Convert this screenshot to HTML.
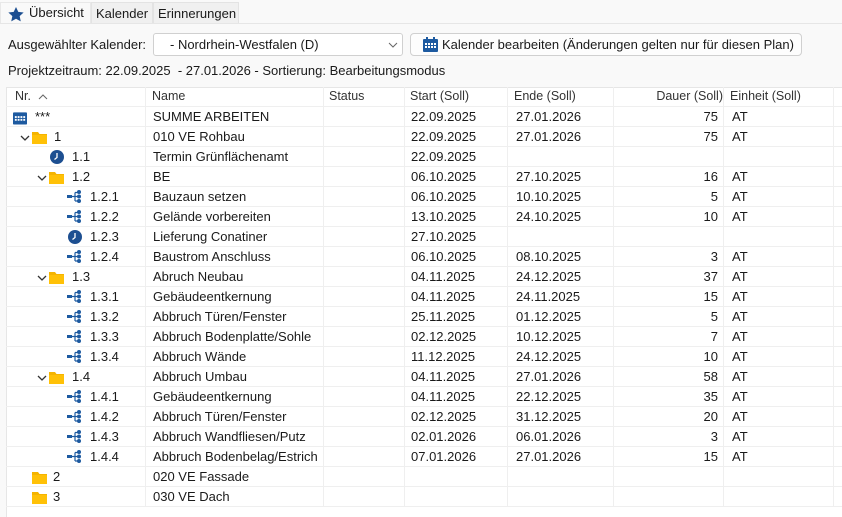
<!DOCTYPE html>
<html><head><meta charset="utf-8"><style>
*{margin:0;padding:0;box-sizing:border-box}
body{width:842px;height:517px;background:#f9f9f9;font-family:"Liberation Sans",sans-serif;font-size:13px;color:#1a1a1a;position:relative;overflow:hidden}
.a{position:absolute;white-space:nowrap}
.tab{position:absolute;top:2px;height:21px;border:1px solid #e3e3e3;border-bottom:none;background:#f0f0f0;padding:3px 4px 0}
#tbl{position:absolute;left:6px;top:87px;width:836px;height:430px;background:#fff;border-left:1px solid #e6e6e6;border-top:1px solid #e6e6e6}
.r{position:absolute;left:6px;width:836px;height:20px;border-bottom:1px solid #efefef}
.r span{position:absolute;top:2px;white-space:nowrap}
.vl{position:absolute;top:87px;height:420px;width:1px;background:#efefef}
.h span{color:#333;font-size:12.5px}
</style></head><body>
<div class="tab" style="left:0;width:91px;background:#f9f9f9;border-color:#e8e8e8;height:22px">
<svg class="a" style="left:7px;top:4px" width="16" height="15" viewBox="0 0 24 23"><path d="M12 0l3.5 7.5 8.2.9-6.1 5.6 1.7 8.1L12 18l-7.3 4.1 1.7-8.1L.3 8.4l8.2-.9z" fill="#1d4f91"/></svg>
<span class="a" style="left:28px;top:2px">Übersicht</span></div>
<div class="tab" style="left:91px;width:62px"><span>Kalender</span></div>
<div class="tab" style="left:153px;width:86px"><span>Erinnerungen</span></div>
<div class="a" style="left:0;top:23px;width:842px;height:1px;background:#e6e6e6"></div>

<span class="a" style="left:8px;top:37px">Ausgewählter Kalender:</span>
<div class="a" style="left:153px;top:33px;width:250px;height:23px;background:#fff;border:1px solid #d0d0d0;border-radius:3px"><span class="a" style="left:16px;top:3px">- Nordrhein-Westfalen (D)</span>
<svg class="a" style="left:234px;top:8px" width="10" height="6"><path d="M1 1l4 4 4-4" stroke="#666" fill="none"/></svg></div>
<div class="a" style="left:410px;top:33px;width:392px;height:23px;background:#fdfdfd;border:1px solid #d0d0d0;border-radius:4px">
<svg class="a" style="left:12px;top:3px" width="15" height="15" viewBox="0 0 15 15"><rect x="0" y="2" width="15" height="13" rx="1" fill="#1d5aa0"/><rect x="3" y="0" width="2" height="4" fill="#1d5aa0"/><rect x="10" y="0" width="2" height="4" fill="#1d5aa0"/><g fill="#fff"><rect x="2" y="6" width="2" height="2"/><rect x="5" y="6" width="2" height="2"/><rect x="8" y="6" width="2" height="2"/><rect x="11" y="6" width="2" height="2"/><rect x="2" y="9" width="2" height="2"/><rect x="5" y="9" width="2" height="2"/><rect x="8" y="9" width="2" height="2"/><rect x="11" y="9" width="2" height="2"/></g></svg>
<span class="a" style="left:31px;top:3px">Kalender bearbeiten (Änderungen gelten nur für diesen Plan)</span></div>
<span class="a" style="left:8px;top:63px">Projektzeitraum: 22.09.2025 &nbsp;- 27.01.2026 - Sortierung: Bearbeitungsmodus</span>

<div id="tbl"></div>
<div class="vl" style="left:145px"></div><div class="vl" style="left:323px"></div><div class="vl" style="left:404px"></div><div class="vl" style="left:507px"></div><div class="vl" style="left:613px"></div><div class="vl" style="left:723px"></div><div class="vl" style="left:833px"></div>

<svg width="0" height="0" style="position:absolute"><defs>
<g id="fo"><path d="M0 2h6l1.5 2H15v10H0z" fill="#f5b400"/><path d="M0 5h15v9H0z" fill="#ffc107"/></g>
<g id="cl"><circle cx="7" cy="7" r="7" fill="#1d4f91"/><path d="M7 3v4.5L4.5 9.5" stroke="#fff" stroke-width="1.3" fill="none"/></g>
<g id="fl"><rect x="0" y="5" width="5" height="3" fill="#1d5aa0"/><circle cx="12" cy="2" r="2" fill="#1d5aa0"/><circle cx="12" cy="6.5" r="2" fill="#1d5aa0"/><circle cx="12" cy="11" r="2" fill="#1d5aa0"/><path d="M5 6.5h5M8 2.5v8.5M8 2.5h3M8 11h3" stroke="#1d5aa0" stroke-width="1.2" fill="none"/></g>
<g id="ch"><path d="M1 1l4 4 4-4" stroke="#333" stroke-width="1.3" fill="none"/></g>
</defs></svg>

<div class="r h" style="top:87px"><span style="left:9px">Nr.</span><svg class="a" style="left:32px;top:7px" width="10" height="6"><path d="M1 5l4-4 4 4" stroke="#666" fill="none"/></svg><span style="left:146px">Name</span><span style="left:323px">Status</span><span style="left:404px">Start (Soll)</span><span style="left:508px">Ende (Soll)</span><span style="left:612px;width:105px;text-align:right">Dauer (Soll)</span><span style="left:724px">Einheit (Soll)</span></div>

<div class="r" style="top:107px"><svg class="a" style="left:7px;top:3px" width="14" height="15" viewBox="0 0 15 15"><rect x="0" y="2" width="15" height="13" rx="1" fill="#1d5aa0"/><g fill="#fff"><rect x="2" y="6" width="2" height="2"/><rect x="5" y="6" width="2" height="2"/><rect x="8" y="6" width="2" height="2"/><rect x="11" y="6" width="2" height="2"/><rect x="2" y="9" width="2" height="2"/><rect x="5" y="9" width="2" height="2"/><rect x="8" y="9" width="2" height="2"/><rect x="11" y="9" width="2" height="2"/></g></svg><span style="left:29px">***</span><span style="left:147px">SUMME ARBEITEN</span><span style="left:405px">22.09.2025</span><span style="left:510px">27.01.2026</span><span style="left:612px;width:100px;text-align:right">75</span><span style="left:726px">AT</span></div>

<div class="r" style="top:127px"><svg class="a" style="left:14px;top:8px" width="10" height="6"><use href="#ch"/></svg><svg class="a" style="left:26px;top:3px" width="15" height="14"><use href="#fo"/></svg><span style="left:48px">1</span><span style="left:147px">010 VE Rohbau</span><span style="left:405px">22.09.2025</span><span style="left:510px">27.01.2026</span><span style="left:612px;width:100px;text-align:right">75</span><span style="left:726px">AT</span></div>

<div class="r" style="top:147px"><svg class="a" style="left:44px;top:3px" width="14" height="14"><use href="#cl"/></svg><span style="left:66px">1.1</span><span style="left:147px">Termin Grünflächenamt</span><span style="left:405px">22.09.2025</span></div>

<div class="r" style="top:167px"><svg class="a" style="left:31px;top:8px" width="10" height="6"><use href="#ch"/></svg><svg class="a" style="left:43px;top:3px" width="15" height="14"><use href="#fo"/></svg><span style="left:66px">1.2</span><span style="left:147px">BE</span><span style="left:405px">06.10.2025</span><span style="left:510px">27.10.2025</span><span style="left:612px;width:100px;text-align:right">16</span><span style="left:726px">AT</span></div>

<div class="r" style="top:187px"><svg class="a" style="left:61px;top:3px" width="15" height="14"><use href="#fl"/></svg><span style="left:84px">1.2.1</span><span style="left:147px">Bauzaun setzen</span><span style="left:405px">06.10.2025</span><span style="left:510px">10.10.2025</span><span style="left:612px;width:100px;text-align:right">5</span><span style="left:726px">AT</span></div>
<div class="r" style="top:207px"><svg class="a" style="left:61px;top:3px" width="15" height="14"><use href="#fl"/></svg><span style="left:84px">1.2.2</span><span style="left:147px">Gelände vorbereiten</span><span style="left:405px">13.10.2025</span><span style="left:510px">24.10.2025</span><span style="left:612px;width:100px;text-align:right">10</span><span style="left:726px">AT</span></div>
<div class="r" style="top:227px"><svg class="a" style="left:62px;top:3px" width="14" height="14"><use href="#cl"/></svg><span style="left:84px">1.2.3</span><span style="left:147px">Lieferung Conatiner</span><span style="left:405px">27.10.2025</span></div>
<div class="r" style="top:247px"><svg class="a" style="left:61px;top:3px" width="15" height="14"><use href="#fl"/></svg><span style="left:84px">1.2.4</span><span style="left:147px">Baustrom Anschluss</span><span style="left:405px">06.10.2025</span><span style="left:510px">08.10.2025</span><span style="left:612px;width:100px;text-align:right">3</span><span style="left:726px">AT</span></div>

<div class="r" style="top:267px"><svg class="a" style="left:31px;top:8px" width="10" height="6"><use href="#ch"/></svg><svg class="a" style="left:43px;top:3px" width="15" height="14"><use href="#fo"/></svg><span style="left:66px">1.3</span><span style="left:147px">Abruch Neubau</span><span style="left:405px">04.11.2025</span><span style="left:510px">24.12.2025</span><span style="left:612px;width:100px;text-align:right">37</span><span style="left:726px">AT</span></div>
<div class="r" style="top:287px"><svg class="a" style="left:61px;top:3px" width="15" height="14"><use href="#fl"/></svg><span style="left:84px">1.3.1</span><span style="left:147px">Gebäudeentkernung</span><span style="left:405px">04.11.2025</span><span style="left:510px">24.11.2025</span><span style="left:612px;width:100px;text-align:right">15</span><span style="left:726px">AT</span></div>
<div class="r" style="top:307px"><svg class="a" style="left:61px;top:3px" width="15" height="14"><use href="#fl"/></svg><span style="left:84px">1.3.2</span><span style="left:147px">Abbruch Türen/Fenster</span><span style="left:405px">25.11.2025</span><span style="left:510px">01.12.2025</span><span style="left:612px;width:100px;text-align:right">5</span><span style="left:726px">AT</span></div>
<div class="r" style="top:327px"><svg class="a" style="left:61px;top:3px" width="15" height="14"><use href="#fl"/></svg><span style="left:84px">1.3.3</span><span style="left:147px">Abbruch Bodenplatte/Sohle</span><span style="left:405px">02.12.2025</span><span style="left:510px">10.12.2025</span><span style="left:612px;width:100px;text-align:right">7</span><span style="left:726px">AT</span></div>
<div class="r" style="top:347px"><svg class="a" style="left:61px;top:3px" width="15" height="14"><use href="#fl"/></svg><span style="left:84px">1.3.4</span><span style="left:147px">Abbruch Wände</span><span style="left:405px">11.12.2025</span><span style="left:510px">24.12.2025</span><span style="left:612px;width:100px;text-align:right">10</span><span style="left:726px">AT</span></div>

<div class="r" style="top:367px"><svg class="a" style="left:31px;top:8px" width="10" height="6"><use href="#ch"/></svg><svg class="a" style="left:43px;top:3px" width="15" height="14"><use href="#fo"/></svg><span style="left:66px">1.4</span><span style="left:147px">Abbruch Umbau</span><span style="left:405px">04.11.2025</span><span style="left:510px">27.01.2026</span><span style="left:612px;width:100px;text-align:right">58</span><span style="left:726px">AT</span></div>
<div class="r" style="top:387px"><svg class="a" style="left:61px;top:3px" width="15" height="14"><use href="#fl"/></svg><span style="left:84px">1.4.1</span><span style="left:147px">Gebäudeentkernung</span><span style="left:405px">04.11.2025</span><span style="left:510px">22.12.2025</span><span style="left:612px;width:100px;text-align:right">35</span><span style="left:726px">AT</span></div>
<div class="r" style="top:407px"><svg class="a" style="left:61px;top:3px" width="15" height="14"><use href="#fl"/></svg><span style="left:84px">1.4.2</span><span style="left:147px">Abbruch Türen/Fenster</span><span style="left:405px">02.12.2025</span><span style="left:510px">31.12.2025</span><span style="left:612px;width:100px;text-align:right">20</span><span style="left:726px">AT</span></div>
<div class="r" style="top:427px"><svg class="a" style="left:61px;top:3px" width="15" height="14"><use href="#fl"/></svg><span style="left:84px">1.4.3</span><span style="left:147px">Abbruch Wandfliesen/Putz</span><span style="left:405px">02.01.2026</span><span style="left:510px">06.01.2026</span><span style="left:612px;width:100px;text-align:right">3</span><span style="left:726px">AT</span></div>
<div class="r" style="top:447px"><svg class="a" style="left:61px;top:3px" width="15" height="14"><use href="#fl"/></svg><span style="left:84px">1.4.4</span><span style="left:147px">Abbruch Bodenbelag/Estrich</span><span style="left:405px">07.01.2026</span><span style="left:510px">27.01.2026</span><span style="left:612px;width:100px;text-align:right">15</span><span style="left:726px">AT</span></div>

<div class="r" style="top:467px"><svg class="a" style="left:26px;top:3px" width="15" height="14"><use href="#fo"/></svg><span style="left:47px">2</span><span style="left:147px">020 VE Fassade</span></div>
<div class="r" style="top:487px"><svg class="a" style="left:26px;top:3px" width="15" height="14"><use href="#fo"/></svg><span style="left:47px">3</span><span style="left:147px">030 VE Dach</span></div>
</body></html>
